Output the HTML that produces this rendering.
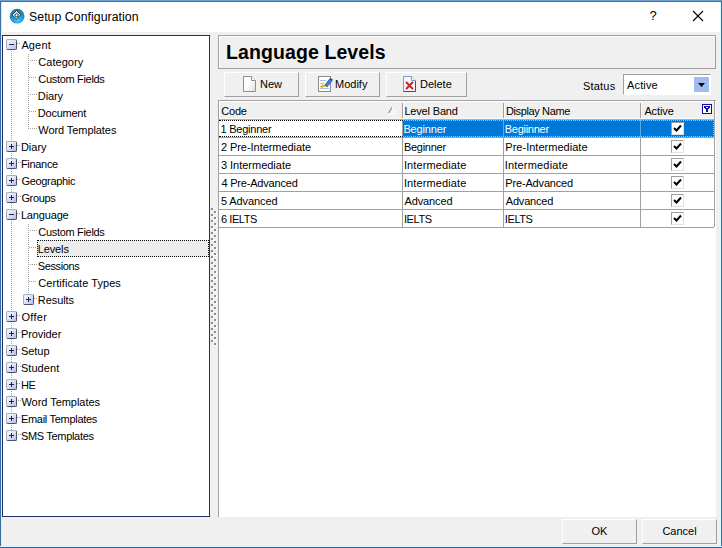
<!DOCTYPE html>
<html lang="en">
<head>
<meta charset="utf-8">
<title>Setup Configuration</title>
<style>
*{box-sizing:border-box;margin:0;padding:0}
html,body{width:722px;height:548px;overflow:hidden;background:#f0f0f0}
body{position:relative;font-family:"Liberation Sans",sans-serif;font-size:11px;color:#000}
.a{position:absolute}
#win{position:absolute;left:0;top:0;width:722px;height:548px;background:#f0f0f0;overflow:hidden}
#bt{left:0;top:0;width:722px;height:2px;background:linear-gradient(180deg,#6b9fd3 0,#6b9fd3 50%,#3c72ab 50%)}
#bl{left:0;top:0;width:2px;height:548px;background:linear-gradient(90deg,#3a6ea6 0,#3a6ea6 50%,#c8f2ff 50%)}
#br{left:720px;top:0;width:2px;height:548px;background:linear-gradient(90deg,#e0f8ff 0,#e0f8ff 50%,#3a6e9c 50%)}
#bb{left:0;top:546px;width:722px;height:2px;background:linear-gradient(180deg,#dff4ff 0,#dff4ff 50%,#2468ab 50%)}
#titlebar{left:1px;top:2px;width:720px;height:30px;background:#fff}
#title{left:29px;top:9px;font-size:12.3px;line-height:16px;white-space:nowrap;letter-spacing:0.05px}
#help{left:646px;top:8px;width:14px;font-size:13px;line-height:16px;text-align:center}
#tree{left:2px;top:35px;width:208px;height:482px;background:#fff;border:1px solid #1f2f6e}
.ti{position:absolute;white-space:nowrap;height:17px;line-height:17px;font-size:11px}
.vl{position:absolute;width:1px;background-image:linear-gradient(180deg,#a0a0a0 50%,rgba(255,255,255,0) 50%);background-size:1px 2px}
.hl{position:absolute;height:1px;background-image:linear-gradient(90deg,#a0a0a0 50%,rgba(255,255,255,0) 50%);background-size:2px 1px}
.eb{position:absolute;width:11px;height:11px;border:1px solid;border-color:#a9abc4 #4a5166 #4a5166 #a9abc4;border-radius:2px;background:linear-gradient(135deg,#f6f7fd 0,#dde1f3 50%,#b0bce6 100%)}
.eb i{position:absolute;left:2px;top:4px;width:5px;height:1px;background:#1a2350}
.eb b{position:absolute;left:4px;top:2px;width:1px;height:5px;background:#1a2350}
#sel{left:37px;top:240px;width:172px;height:17px;background:#ececec;border:1px dotted #111}
#hdr{left:218px;top:35px;width:498px;height:34px;border:1px solid #a0a0a0;background:#f0f0f0;box-shadow:inset 1px 1px 0 #fff}
#hdr span{position:absolute;left:7px;top:4px;font-weight:bold;font-size:19.5px;line-height:24px;white-space:nowrap;letter-spacing:0.1px}
.btn{position:absolute;height:26px;background:#f0f0f0;border-top:1px solid #fff;border-left:1px solid #fff;border-right:1px solid #a0a0a0;border-bottom:1px solid #a0a0a0;font-size:11px;line-height:24px;white-space:nowrap}
.btn span{position:absolute;top:0}
.btn svg{position:absolute}
#grid{left:218px;top:100px;width:498px;height:417px;background:#fff;border-top:1px solid #a0a0a0;border-left:1px solid #a0a0a0}
.gh{position:absolute;top:102px;height:18px;line-height:18px;font-size:11px;white-space:nowrap}
.gc{position:absolute;height:17px;line-height:17px;font-size:11px;white-space:nowrap}
.gl{position:absolute;background:#a0a0a0}
.cb{position:absolute;width:13px;height:13px;background:#fff;border-top:1px solid #a0a0a0;border-left:1px solid #a0a0a0;border-right:1px solid #e3e3e3;border-bottom:1px solid #e3e3e3}
.cb svg{position:absolute;left:0px;top:0px}
</style>
</head>
<body>
<div id="win">
<div id="titlebar" class="a"></div>
<svg class="a" style="left:9px;top:8px" width="16" height="16" viewBox="0 0 16 16">
<defs><radialGradient id="g1" cx="55%" cy="80%" r="75%"><stop offset="0" stop-color="#3fcaf4"/><stop offset="0.55" stop-color="#2490d8"/><stop offset="1" stop-color="#1a8098"/></radialGradient></defs>
<circle cx="8.1" cy="8.2" r="7.4" fill="url(#g1)"/>
<path d="M7.4 2.6 L11.8 6.8 L7.4 11 L3 6.8 Z" fill="#eef8fd" stroke="#0e2230" stroke-width=".9"/>
<circle cx="7.6" cy="7.2" r="1.6" fill="#fff" stroke="#0e2230" stroke-width=".9"/>
</svg>
<div id="title" class="a">Setup Configuration</div>
<div id="help" class="a">?</div>
<svg class="a" style="left:692px;top:10px" width="12" height="12" viewBox="0 0 12 12"><path d="M1 1 L11 11 M11 1 L1 11" stroke="#000" stroke-width="1.1" fill="none"/></svg>
<div id="tree" class="a"></div>
<div id="sel" class="a"></div>
<div class="vl a" style="left:11px;top:51px;height:379px"></div>
<div class="vl a" style="left:28px;top:54px;height:75px"></div>
<div class="vl a" style="left:28px;top:224px;height:70px"></div>
<div class="hl a" style="left:17px;top:43px;width:4px"></div>
<div class="eb" style="left:6px;top:39px"><i></i></div>
<div class="ti" id="t0" style="left:21.4px;letter-spacing:0.138px;top:37px">Agent</div>
<div class="hl a" style="left:30px;top:60px;width:7px"></div>
<div class="ti" id="t1" style="left:38.3px;letter-spacing:0.04px;top:54px">Category</div>
<div class="hl a" style="left:29px;top:77px;width:8px"></div>
<div class="ti" id="t2" style="left:38.3px;letter-spacing:-0.315px;top:71px">Custom Fields</div>
<div class="hl a" style="left:30px;top:94px;width:7px"></div>
<div class="ti" id="t3" style="left:37.8px;letter-spacing:-0.105px;top:88px">Diary</div>
<div class="hl a" style="left:29px;top:111px;width:8px"></div>
<div class="ti" id="t4" style="left:37.8px;letter-spacing:-0.24px;top:105px">Document</div>
<div class="hl a" style="left:30px;top:128px;width:7px"></div>
<div class="ti" id="t5" style="left:38.3px;letter-spacing:-0.075px;top:122px">Word Templates</div>
<div class="hl a" style="left:17px;top:145px;width:4px"></div>
<div class="eb" style="left:6px;top:141px"><i></i><b></b></div>
<div class="ti" id="t6" style="left:20.9px;letter-spacing:0.002px;top:139px">Diary</div>
<div class="hl a" style="left:18px;top:162px;width:3px"></div>
<div class="eb" style="left:6px;top:158px"><i></i><b></b></div>
<div class="ti" id="t7" style="left:20.9px;letter-spacing:-0.303px;top:156px">Finance</div>
<div class="hl a" style="left:17px;top:179px;width:4px"></div>
<div class="eb" style="left:6px;top:175px"><i></i><b></b></div>
<div class="ti" id="t8" style="left:21.4px;letter-spacing:-0.311px;top:173px">Geographic</div>
<div class="hl a" style="left:18px;top:196px;width:3px"></div>
<div class="eb" style="left:6px;top:192px"><i></i><b></b></div>
<div class="ti" id="t9" style="left:21.4px;letter-spacing:-0.364px;top:190px">Groups</div>
<div class="hl a" style="left:17px;top:213px;width:4px"></div>
<div class="eb" style="left:6px;top:209px"><i></i></div>
<div class="ti" id="t10" style="left:20.9px;letter-spacing:-0.16px;top:207px">Language</div>
<div class="hl a" style="left:30px;top:230px;width:7px"></div>
<div class="ti" id="t11" style="left:38.3px;letter-spacing:-0.315px;top:224px">Custom Fields</div>
<div class="hl a" style="left:29px;top:247px;width:8px"></div>
<div class="ti" id="t12" style="left:37.8px;letter-spacing:-0.14px;top:241px">Levels</div>
<div class="hl a" style="left:30px;top:264px;width:7px"></div>
<div class="ti" id="t13" style="left:37.8px;letter-spacing:-0.4px;top:258px">Sessions</div>
<div class="hl a" style="left:29px;top:281px;width:8px"></div>
<div class="ti" id="t14" style="left:38.3px;letter-spacing:0.052px;top:275px">Certificate Types</div>
<div class="hl a" style="left:34px;top:298px;width:4px"></div>
<div class="eb" style="left:23px;top:294px"><i></i><b></b></div>
<div class="ti" id="t15" style="left:37.8px;letter-spacing:-0.069px;top:292px">Results</div>
<div class="hl a" style="left:17px;top:315px;width:4px"></div>
<div class="eb" style="left:6px;top:311px"><i></i><b></b></div>
<div class="ti" id="t16" style="left:21.4px;letter-spacing:0.315px;top:309px">Offer</div>
<div class="hl a" style="left:18px;top:332px;width:3px"></div>
<div class="eb" style="left:6px;top:328px"><i></i><b></b></div>
<div class="ti" id="t17" style="left:20.9px;letter-spacing:-0.08px;top:326px">Provider</div>
<div class="hl a" style="left:17px;top:349px;width:4px"></div>
<div class="eb" style="left:6px;top:345px"><i></i><b></b></div>
<div class="ti" id="t18" style="left:20.9px;letter-spacing:-0.035px;top:343px">Setup</div>
<div class="hl a" style="left:18px;top:366px;width:3px"></div>
<div class="eb" style="left:6px;top:362px"><i></i><b></b></div>
<div class="ti" id="t19" style="left:20.9px;letter-spacing:0.071px;top:360px">Student</div>
<div class="hl a" style="left:17px;top:383px;width:4px"></div>
<div class="eb" style="left:6px;top:379px"><i></i><b></b></div>
<div class="ti" id="t20" style="left:20.9px;letter-spacing:-0.4px;top:377px">HE</div>
<div class="hl a" style="left:18px;top:400px;width:3px"></div>
<div class="eb" style="left:6px;top:396px"><i></i><b></b></div>
<div class="ti" id="t21" style="left:21.4px;letter-spacing:-0.033px;top:394px">Word Templates</div>
<div class="hl a" style="left:17px;top:417px;width:4px"></div>
<div class="eb" style="left:6px;top:413px"><i></i><b></b></div>
<div class="ti" id="t22" style="left:20.9px;letter-spacing:-0.29px;top:411px">Email Templates</div>
<div class="hl a" style="left:18px;top:434px;width:3px"></div>
<div class="eb" style="left:6px;top:430px"><i></i><b></b></div>
<div class="ti" id="t23" style="left:20.9px;letter-spacing:-0.316px;top:428px">SMS Templates</div>
<svg class="a" style="left:211px;top:208px" width="7" height="140" viewBox="0 0 7 140"><rect x="1" y="1" width="2" height="2" fill="#fff"/><rect x="0" y="0" width="2" height="2" fill="#8c8c8c"/><rect x="4" y="4" width="2" height="2" fill="#fff"/><rect x="3" y="3" width="2" height="2" fill="#8c8c8c"/><rect x="1" y="7" width="2" height="2" fill="#fff"/><rect x="0" y="6" width="2" height="2" fill="#8c8c8c"/><rect x="4" y="10" width="2" height="2" fill="#fff"/><rect x="3" y="9" width="2" height="2" fill="#8c8c8c"/><rect x="1" y="13" width="2" height="2" fill="#fff"/><rect x="0" y="12" width="2" height="2" fill="#8c8c8c"/><rect x="4" y="16" width="2" height="2" fill="#fff"/><rect x="3" y="15" width="2" height="2" fill="#8c8c8c"/><rect x="1" y="19" width="2" height="2" fill="#fff"/><rect x="0" y="18" width="2" height="2" fill="#8c8c8c"/><rect x="4" y="22" width="2" height="2" fill="#fff"/><rect x="3" y="21" width="2" height="2" fill="#8c8c8c"/><rect x="1" y="25" width="2" height="2" fill="#fff"/><rect x="0" y="24" width="2" height="2" fill="#8c8c8c"/><rect x="4" y="28" width="2" height="2" fill="#fff"/><rect x="3" y="27" width="2" height="2" fill="#8c8c8c"/><rect x="1" y="31" width="2" height="2" fill="#fff"/><rect x="0" y="30" width="2" height="2" fill="#8c8c8c"/><rect x="4" y="34" width="2" height="2" fill="#fff"/><rect x="3" y="33" width="2" height="2" fill="#8c8c8c"/><rect x="1" y="37" width="2" height="2" fill="#fff"/><rect x="0" y="36" width="2" height="2" fill="#8c8c8c"/><rect x="4" y="40" width="2" height="2" fill="#fff"/><rect x="3" y="39" width="2" height="2" fill="#8c8c8c"/><rect x="1" y="43" width="2" height="2" fill="#fff"/><rect x="0" y="42" width="2" height="2" fill="#8c8c8c"/><rect x="4" y="46" width="2" height="2" fill="#fff"/><rect x="3" y="45" width="2" height="2" fill="#8c8c8c"/><rect x="1" y="49" width="2" height="2" fill="#fff"/><rect x="0" y="48" width="2" height="2" fill="#8c8c8c"/><rect x="4" y="52" width="2" height="2" fill="#fff"/><rect x="3" y="51" width="2" height="2" fill="#8c8c8c"/><rect x="1" y="55" width="2" height="2" fill="#fff"/><rect x="0" y="54" width="2" height="2" fill="#8c8c8c"/><rect x="4" y="58" width="2" height="2" fill="#fff"/><rect x="3" y="57" width="2" height="2" fill="#8c8c8c"/><rect x="1" y="61" width="2" height="2" fill="#fff"/><rect x="0" y="60" width="2" height="2" fill="#8c8c8c"/><rect x="4" y="64" width="2" height="2" fill="#fff"/><rect x="3" y="63" width="2" height="2" fill="#8c8c8c"/><rect x="1" y="67" width="2" height="2" fill="#fff"/><rect x="0" y="66" width="2" height="2" fill="#8c8c8c"/><rect x="4" y="70" width="2" height="2" fill="#fff"/><rect x="3" y="69" width="2" height="2" fill="#8c8c8c"/><rect x="1" y="73" width="2" height="2" fill="#fff"/><rect x="0" y="72" width="2" height="2" fill="#8c8c8c"/><rect x="4" y="76" width="2" height="2" fill="#fff"/><rect x="3" y="75" width="2" height="2" fill="#8c8c8c"/><rect x="1" y="79" width="2" height="2" fill="#fff"/><rect x="0" y="78" width="2" height="2" fill="#8c8c8c"/><rect x="4" y="82" width="2" height="2" fill="#fff"/><rect x="3" y="81" width="2" height="2" fill="#8c8c8c"/><rect x="1" y="85" width="2" height="2" fill="#fff"/><rect x="0" y="84" width="2" height="2" fill="#8c8c8c"/><rect x="4" y="88" width="2" height="2" fill="#fff"/><rect x="3" y="87" width="2" height="2" fill="#8c8c8c"/><rect x="1" y="91" width="2" height="2" fill="#fff"/><rect x="0" y="90" width="2" height="2" fill="#8c8c8c"/><rect x="4" y="94" width="2" height="2" fill="#fff"/><rect x="3" y="93" width="2" height="2" fill="#8c8c8c"/><rect x="1" y="97" width="2" height="2" fill="#fff"/><rect x="0" y="96" width="2" height="2" fill="#8c8c8c"/><rect x="4" y="100" width="2" height="2" fill="#fff"/><rect x="3" y="99" width="2" height="2" fill="#8c8c8c"/><rect x="1" y="103" width="2" height="2" fill="#fff"/><rect x="0" y="102" width="2" height="2" fill="#8c8c8c"/><rect x="4" y="106" width="2" height="2" fill="#fff"/><rect x="3" y="105" width="2" height="2" fill="#8c8c8c"/><rect x="1" y="109" width="2" height="2" fill="#fff"/><rect x="0" y="108" width="2" height="2" fill="#8c8c8c"/><rect x="4" y="112" width="2" height="2" fill="#fff"/><rect x="3" y="111" width="2" height="2" fill="#8c8c8c"/><rect x="1" y="115" width="2" height="2" fill="#fff"/><rect x="0" y="114" width="2" height="2" fill="#8c8c8c"/><rect x="4" y="118" width="2" height="2" fill="#fff"/><rect x="3" y="117" width="2" height="2" fill="#8c8c8c"/><rect x="1" y="121" width="2" height="2" fill="#fff"/><rect x="0" y="120" width="2" height="2" fill="#8c8c8c"/><rect x="4" y="124" width="2" height="2" fill="#fff"/><rect x="3" y="123" width="2" height="2" fill="#8c8c8c"/><rect x="1" y="127" width="2" height="2" fill="#fff"/><rect x="0" y="126" width="2" height="2" fill="#8c8c8c"/><rect x="4" y="130" width="2" height="2" fill="#fff"/><rect x="3" y="129" width="2" height="2" fill="#8c8c8c"/><rect x="1" y="133" width="2" height="2" fill="#fff"/><rect x="0" y="132" width="2" height="2" fill="#8c8c8c"/><rect x="4" y="136" width="2" height="2" fill="#fff"/><rect x="3" y="135" width="2" height="2" fill="#8c8c8c"/></svg>
<div id="hdr" class="a"><span>Language Levels</span></div>
<div class="btn" style="left:224px;top:72px;width:75px;height:25px;line-height:23px"><svg style="left:18px;top:3px" width="14" height="17" viewBox="0 0 14 17"><defs><linearGradient id="pg" x1="0" y1="0" x2="1" y2="1"><stop offset="0" stop-color="#fff"/><stop offset="0.5" stop-color="#fbfbfb"/><stop offset="1" stop-color="#dcdcdc"/></linearGradient></defs><path d="M0.5 0.5 H8.5 L12.5 4.5 V15.5 H0.5 Z" fill="url(#pg)" stroke="#8e8e8e"/><path d="M8.5 0.5 V4.5 H12.5" fill="#fff" stroke="#8e8e8e"/></svg><span style="left:35px">New</span></div>
<div class="btn" style="left:305px;top:72px;width:75px;height:25px;line-height:23px"><svg style="left:12px;top:3px" width="16" height="17" viewBox="0 0 16 17"><rect x="0.5" y="0.5" width="12" height="15" fill="#fdfdf8" stroke="#8c8c8c"/><path d="M2 4.5 H8 M2 7.5 H6 M2 12.5 H11" stroke="#a9c4d4" stroke-width="1"/><path d="M2 10.6 L5 8.8 L7.8 9.8 L4 11.4 Z" fill="#f0b41a" stroke="#e0a000" stroke-width=".6"/><path d="M7 9.2 L11.6 3 L14 4.8 L9.2 10.8 Z" fill="#3b82e0" stroke="#1c4fa8" stroke-width=".8"/><path d="M11.6 3 L12.6 1.9 L14.9 3.7 L14 4.8 Z" fill="#1c3f98"/></svg><span style="left:29px">Modify</span></div>
<div class="btn" style="left:386px;top:72px;width:81px;height:25px;line-height:23px"><svg style="left:16px;top:3px" width="14" height="17" viewBox="0 0 14 17"><path d="M0.5 0.5 H8.5 L12.5 4.5 V15.5 H0.5 Z" fill="#f2f6fc" stroke="#7d9cc0"/><path d="M8.5 0.5 V4.5 H12.5" fill="#fff" stroke="#7d9cc0"/><path d="M0.5 15.5 H12.5 V5" fill="none" stroke="#33547c"/><path d="M3.6 6.6 L9.4 12.4 M9.4 6.6 L3.6 12.4" stroke="#d02424" stroke-width="2.1" stroke-linecap="round"/></svg><span style="left:33px">Delete</span></div>
<div class="a" style="left:583px;top:78px;line-height:17px;white-space:nowrap;letter-spacing:0.2px">Status</div>
<div class="a" style="left:623px;top:74px;width:88px;height:21px;background:#fff;border-top:1px solid #a0a0a0;border-left:1px solid #a0a0a0;border-right:1px solid #fff;border-bottom:1px solid #fff"></div>
<div class="a" style="left:627px;top:77px;line-height:17px;white-space:nowrap;letter-spacing:0.15px">Active</div>
<div class="a" style="left:694px;top:77px;width:15px;height:15px;background:#a1bbec"></div>
<svg class="a" style="left:698px;top:83px" width="7" height="4" viewBox="0 0 7 4"><path d="M0 0 H7 L3.5 4 Z" fill="#000"/></svg>
<div id="grid" class="a"></div>
<div class="a" style="left:219px;top:101px;width:495px;height:18px;background:#f0f0f0;border-top:1px solid #fff;border-left:1px solid #fff"></div>
<div class="gl" style="left:402px;top:120px;width:1px;height:107px"></div>
<div class="gl" style="left:402px;top:103px;width:1px;height:15px"></div>
<div class="gl" style="left:403px;top:103px;width:1px;height:15px;background:#fff"></div>
<div class="gl" style="left:503px;top:120px;width:1px;height:107px"></div>
<div class="gl" style="left:503px;top:103px;width:1px;height:15px"></div>
<div class="gl" style="left:504px;top:103px;width:1px;height:15px;background:#fff"></div>
<div class="gl" style="left:640px;top:120px;width:1px;height:107px"></div>
<div class="gl" style="left:640px;top:103px;width:1px;height:15px"></div>
<div class="gl" style="left:641px;top:103px;width:1px;height:15px;background:#fff"></div>
<div class="gl" style="left:714px;top:120px;width:1px;height:107px"></div>
<div class="gl" style="left:714px;top:101px;width:1px;height:19px"></div>
<div class="gl" style="left:219px;top:118px;width:495px;height:1px;background:#f8f8f8"></div>
<div class="gl" style="left:219px;top:119px;width:495px;height:1px;background:#b0b0b0"></div>
<div class="a" style="left:403px;top:120px;width:311px;height:17px;background:#0078d7"></div>
<div class="a" style="left:503px;top:120px;width:1px;height:17px;background:#5aa6ea"></div>
<div class="a" style="left:640px;top:120px;width:1px;height:17px;background:#5aa6ea"></div>
<div class="a" style="left:219px;top:120px;width:184px;height:17px;border-top:1px dotted #000;border-bottom:1px dotted #000"></div>
<div class="a" style="left:403px;top:120px;width:311px;height:17px;border-top:1px dotted #9fc0e6;border-bottom:1px dotted #9fc0e6;border-right:1px dotted #9fc0e6"></div>
<div class="gl" style="left:219px;top:137px;width:495px;height:1px"></div>
<div class="gl" style="left:219px;top:155px;width:495px;height:1px"></div>
<div class="gl" style="left:219px;top:173px;width:495px;height:1px"></div>
<div class="gl" style="left:219px;top:191px;width:495px;height:1px"></div>
<div class="gl" style="left:219px;top:209px;width:495px;height:1px"></div>
<div class="gl" style="left:219px;top:227px;width:495px;height:1px"></div>
<div class="gh" id="h0" style="left:221.2px;letter-spacing:-0.187px">Code</div>
<div class="gh" id="h1" style="left:404.4px;letter-spacing:-0.171px">Level Band</div>
<div class="gh" id="h2" style="left:505.9px;letter-spacing:-0.37px">Display Name</div>
<div class="gh" id="h3" style="left:644.4px;letter-spacing:-0.112px">Active</div>
<svg class="a" style="left:387px;top:106px" width="10" height="9" viewBox="0 0 10 9"><path d="M5 1 L1.5 7.5" fill="none" stroke="#8a8a8a" stroke-width="1.1"/><path d="M5 1 L9 7.5 H1.5" fill="none" stroke="#fff" stroke-width="1.1"/></svg>
<svg class="a" style="left:702px;top:104px" width="10" height="10" viewBox="0 0 10 10"><rect x="0.5" y="0.5" width="9" height="9" fill="#fff" stroke="#0c0cb0"/><path d="M2 2H8V4H7V5H6V8H4V5H3V4H2Z M4 3V4H6V3Z" fill="#0c0cb0" fill-rule="evenodd"/></svg>
<div class="gc" id="c00" style="left:220.4px;letter-spacing:-0.218px;top:121px">1 Beginner</div>
<div class="gc" id="c01" style="left:403.4px;letter-spacing:-0.16px;top:121px;color:#fff">Beginner</div>
<div class="gc" id="c02" style="left:504.8px;letter-spacing:-0.279px;top:121px;color:#fff">Begiinner</div>
<div class="cb" style="left:671px;top:122px"><svg width="11" height="11" viewBox="0 0 11 11"><path d="M2 5 L4.5 7.5 L9 2.5" fill="none" stroke="#000" stroke-width="2"/></svg></div>
<div class="gc" id="c10" style="left:220.9px;letter-spacing:-0.049px;top:139px">2 Pre-Intermediate</div>
<div class="gc" id="c11" style="left:403.9px;letter-spacing:-0.26px;top:139px;color:#000">Beginner</div>
<div class="gc" id="c12" style="left:505.3px;letter-spacing:0.019px;top:139px;color:#000">Pre-Intermediate</div>
<div class="cb" style="left:671px;top:140px"><svg width="11" height="11" viewBox="0 0 11 11"><path d="M2 5 L4.5 7.5 L9 2.5" fill="none" stroke="#000" stroke-width="2"/></svg></div>
<div class="gc" id="c20" style="left:220.9px;letter-spacing:-0.01px;top:157px">3 Intermediate</div>
<div class="gc" id="c21" style="left:403.9px;letter-spacing:0.114px;top:157px;color:#000">Intermediate</div>
<div class="gc" id="c22" style="left:504.8px;letter-spacing:0.178px;top:157px;color:#000">Intermediate</div>
<div class="cb" style="left:671px;top:158px"><svg width="11" height="11" viewBox="0 0 11 11"><path d="M2 5 L4.5 7.5 L9 2.5" fill="none" stroke="#000" stroke-width="2"/></svg></div>
<div class="gc" id="c30" style="left:221.4px;letter-spacing:-0.193px;top:175px">4 Pre-Advanced</div>
<div class="gc" id="c31" style="left:403.9px;letter-spacing:0.114px;top:175px;color:#000">Intermediate</div>
<div class="gc" id="c32" style="left:505.3px;letter-spacing:-0.165px;top:175px;color:#000">Pre-Advanced</div>
<div class="cb" style="left:671px;top:176px"><svg width="11" height="11" viewBox="0 0 11 11"><path d="M2 5 L4.5 7.5 L9 2.5" fill="none" stroke="#000" stroke-width="2"/></svg></div>
<div class="gc" id="c40" style="left:220.9px;letter-spacing:-0.078px;top:193px">5 Advanced</div>
<div class="gc" id="c41" style="left:404.4px;letter-spacing:-0.1px;top:193px;color:#000">Advanced</div>
<div class="gc" id="c42" style="left:505.8px;letter-spacing:-0.2px;top:193px;color:#000">Advanced</div>
<div class="cb" style="left:671px;top:194px"><svg width="11" height="11" viewBox="0 0 11 11"><path d="M2 5 L4.5 7.5 L9 2.5" fill="none" stroke="#000" stroke-width="2"/></svg></div>
<div class="gc" id="c50" style="left:220.9px;letter-spacing:-0.4px;top:211px">6 IELTS</div>
<div class="gc" id="c51" style="left:403.9px;letter-spacing:-0.4px;top:211px;color:#000">IELTS</div>
<div class="gc" id="c52" style="left:504.8px;letter-spacing:-0.4px;top:211px;color:#000">IELTS</div>
<div class="cb" style="left:671px;top:212px"><svg width="11" height="11" viewBox="0 0 11 11"><path d="M2 5 L4.5 7.5 L9 2.5" fill="none" stroke="#000" stroke-width="2"/></svg></div>
<div class="btn" style="left:562px;top:519px;width:75px;height:25px;text-align:center;line-height:23px">OK</div>
<div class="btn" style="left:642px;top:519px;width:75px;height:25px;text-align:center;line-height:23px">Cancel</div>
<div id="bl" class="a"></div><div id="br" class="a"></div><div id="bt" class="a"></div><div id="bb" class="a"></div>
</div>
</body>
</html>
